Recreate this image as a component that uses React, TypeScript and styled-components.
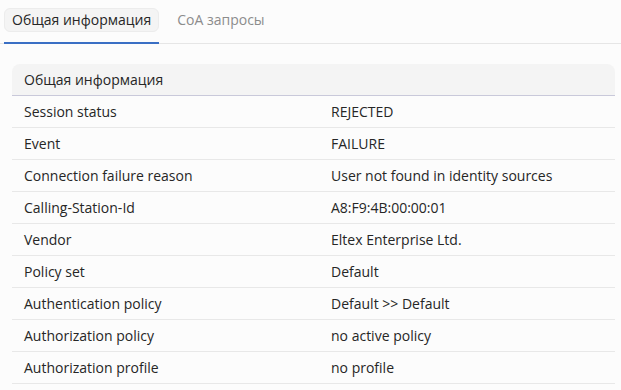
import React from 'react'
import styled, { createGlobalStyle } from 'styled-components'

const GlobalStyle = createGlobalStyle`
  html, body {
    margin: 0;
    padding: 0;
    background: #fcfcfc;
  }
  body {
    font-family: 'Open Sans', 'Noto Sans', sans-serif;
    font-size: 14px;
    color: #262626;
  }
`

type RowType = {
  label: string
  value: string
}

const ROWS: RowType[] = [
  { label: 'Session status', value: 'REJECTED' },
  { label: 'Event', value: 'FAILURE' },
  { label: 'Connection failure reason', value: 'User not found in identity sources' },
  { label: 'Calling-Station-Id', value: 'A8:F9:4B:00:00:01' },
  { label: 'Vendor', value: 'Eltex Enterprise Ltd.' },
  { label: 'Policy set', value: 'Default' },
  { label: 'Authentication policy', value: 'Default >> Default' },
  { label: 'Authorization policy', value: 'no active policy' },
  { label: 'Authorization profile', value: 'no profile' },
]

const Page = styled.div`
  display: flex;
  flex-direction: column;
`

const TabBar = styled.div`
  display: flex;
  align-items: stretch;
  gap: 10px;
  padding: 0 4px;
  border-bottom: 1px solid #e6e6e6;
  height: 44px;
  box-sizing: border-box;
`

const Tab = styled.div<{ active?: boolean }>`
  display: flex;
  align-items: flex-start;
  padding-top: 8px;
  box-sizing: border-box;
  margin-bottom: -1px;
  border-bottom: 2px solid ${props => (props.active ? '#3a6fc4' : 'transparent')};
`

const TabLabel = styled.span<{ active?: boolean }>`
  display: block;
  height: 24px;
  line-height: 22px;
  padding: 0 7px;
  box-sizing: border-box;
  border-radius: 6px;
  border: 1px solid ${props => (props.active ? '#ececec' : 'transparent')};
  background: ${props => (props.active ? '#f4f4f4' : 'transparent')};
  color: ${props => (props.active ? '#262626' : '#8c8c8c')};
  white-space: nowrap;
`

const Card = styled.div`
  margin: 20px 6px 0 12px;
`

const CardHeader = styled.div`
  height: 32px;
  display: flex;
  align-items: center;
  padding: 0 12px;
  background: #f4f4f4;
  border-radius: 8px 8px 0 0;
  border-bottom: 1px solid #c9c9da;
  box-sizing: border-box;
`

const Row = styled.div`
  display: grid;
  grid-template-columns: 307px 1fr;
  height: 32px;
  align-items: center;
  padding: 0 12px;
  border-bottom: 1px solid #e8e8e8;
  box-sizing: border-box;
`

const Cell = styled.span`
  white-space: nowrap;
`

export default function App() {
  return (
    <Page>
      <GlobalStyle />
      <TabBar>
        <Tab active>
          <TabLabel active>Общая информация</TabLabel>
        </Tab>
        <Tab>
          <TabLabel>CoA запросы</TabLabel>
        </Tab>
      </TabBar>
      <Card>
        <CardHeader>Общая информация</CardHeader>
        {ROWS.map(row => (
          <Row key={row.label}>
            <Cell>{row.label}</Cell>
            <Cell>{row.value}</Cell>
          </Row>
        ))}
      </Card>
    </Page>
  )
}
